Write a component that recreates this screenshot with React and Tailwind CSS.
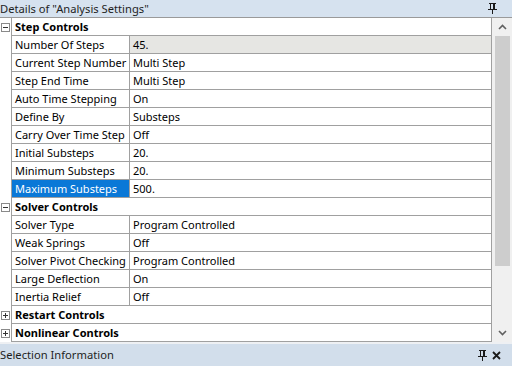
import React from 'react';

const sections = [
  {
    title: 'Step Controls',
    open: true,
    rows: [
      ['Number Of Steps', '45.', 'shade'],
      ['Current Step Number', 'Multi Step'],
      ['Step End Time', 'Multi Step'],
      ['Auto Time Stepping', 'On'],
      ['Define By', 'Substeps'],
      ['Carry Over Time Step', 'Off'],
      ['Initial Substeps', '20.'],
      ['Minimum Substeps', '20.'],
      ['Maximum Substeps', '500.', 'selected'],
    ],
  },
  {
    title: 'Solver Controls',
    open: true,
    rows: [
      ['Solver Type', 'Program Controlled'],
      ['Weak Springs', 'Off'],
      ['Solver Pivot Checking', 'Program Controlled'],
      ['Large Deflection', 'On'],
      ['Inertia Relief', 'Off'],
    ],
  },
  { title: 'Restart Controls', open: false, rows: [] },
  { title: 'Nonlinear Controls', open: false, rows: [] },
];

function PinIcon() {
  return (
    <svg width="9" height="11" viewBox="0 0 9 11" className="block">
      <rect x="1" y="0" width="7" height="1" fill="#1a1a1a" />
      <rect x="2" y="1" width="1" height="5" fill="#1a1a1a" />
      <rect x="5" y="1" width="2" height="5" fill="#1a1a1a" />
      <rect x="0" y="6" width="9" height="1" fill="#1a1a1a" />
      <rect x="4" y="7" width="1" height="4" fill="#1a1a1a" />
    </svg>
  );
}

function CloseIcon() {
  return (
    <svg width="9" height="9" viewBox="0 0 9 9" className="block">
      <path d="M1 1 L8 8 M8 1 L1 8" stroke="#1a1a1a" strokeWidth="1.8" />
    </svg>
  );
}

function Expander({ open }) {
  return (
    <div className="w-[9px] h-[9px] border border-[#8a8a8a] bg-white relative">
      <div className="absolute w-[5px] h-px bg-[#333] left-[1px] top-[3px]" />
      {!open && <div className="absolute w-px h-[5px] bg-[#333] left-[3px] top-[1px]" />}
    </div>
  );
}

function HeaderRow({ title, open }) {
  return (
    <div className="flex h-[18px]">
      <div className="w-[11px] flex items-center pl-[1px]">
        <Expander open={open} />
      </div>
      <div className="flex-1 border-l border-b border-[#a0a0a0] pl-[3px] flex items-center font-bold text-black">
        {title}
      </div>
    </div>
  );
}

function DataRow({ label, value, kind }) {
  const selected = kind === 'selected';
  const shade = kind === 'shade';
  return (
    <div className="flex h-[18px]">
      <div className="w-[11px]" />
      <div
        className={`w-[118px] border-l border-b border-[#a0a0a0] pl-[3px] flex items-center whitespace-nowrap overflow-hidden ${
          selected ? 'bg-[#0a78d7] text-white' : 'text-black'
        }`}
      >
        {label}
      </div>
      <div
        className={`flex-1 border-l border-b border-[#a0a0a0] pl-[3px] flex items-center whitespace-nowrap text-black ${
          shade ? 'bg-[#e6e6e3]' : 'bg-white'
        }`}
      >
        {value}
      </div>
    </div>
  );
}

export default function App() {
  return (
    <div
      className="w-[512px] h-[366px] bg-white flex flex-col overflow-hidden text-[11px] leading-none"
      style={{ fontFamily: '"Segoe UI", "Noto Sans", "Liberation Sans", sans-serif' }}
    >
      <div className="h-[17px] bg-[#d6e2ef] flex items-center justify-between pr-[15px] text-[#1e1e1e] text-[11.2px]">
        <span>Details of "Analysis Settings"</span>
        <PinIcon />
      </div>
      <div className="h-px bg-[#9a9a9a]" />
      <div className="flex h-[324px]">
        <div className="flex-1 border-r border-[#a0a0a0]">
          {sections.map((s) => (
            <div key={s.title}>
              <HeaderRow title={s.title} open={s.open} />
              {s.rows.map((r) => (
                <DataRow key={r[0]} label={r[0]} value={r[1]} kind={r[2]} />
              ))}
            </div>
          ))}
        </div>
        <div className="w-[20px] bg-[#f0f0f0] flex flex-col items-center">
          <div className="h-[18px] flex items-center justify-center">
            <svg width="9" height="6" viewBox="0 0 9 6"><path d="M1 5 L4.5 1.5 L8 5" stroke="#606060" strokeWidth="1.6" fill="none" /></svg>
          </div>
          <div className="w-[15px] h-[230px] bg-[#cdcdcd]" />
          <div className="flex-1" />
          <div className="h-[18px] flex items-center justify-center">
            <svg width="9" height="6" viewBox="0 0 9 6"><path d="M1 1 L4.5 4.5 L8 1" stroke="#606060" strokeWidth="1.6" fill="none" /></svg>
          </div>
        </div>
      </div>
      <div className="h-[2px] bg-[#eef0f3]" />
      <div className="flex-1 bg-[#d2deeb] flex items-center justify-between pr-[11px] text-[11.2px] text-[#1e1e1e]">
        <span>Selection Information</span>
        <div className="flex items-center gap-[5px]">
          <PinIcon />
          <CloseIcon />
        </div>
      </div>
    </div>
  );
}
